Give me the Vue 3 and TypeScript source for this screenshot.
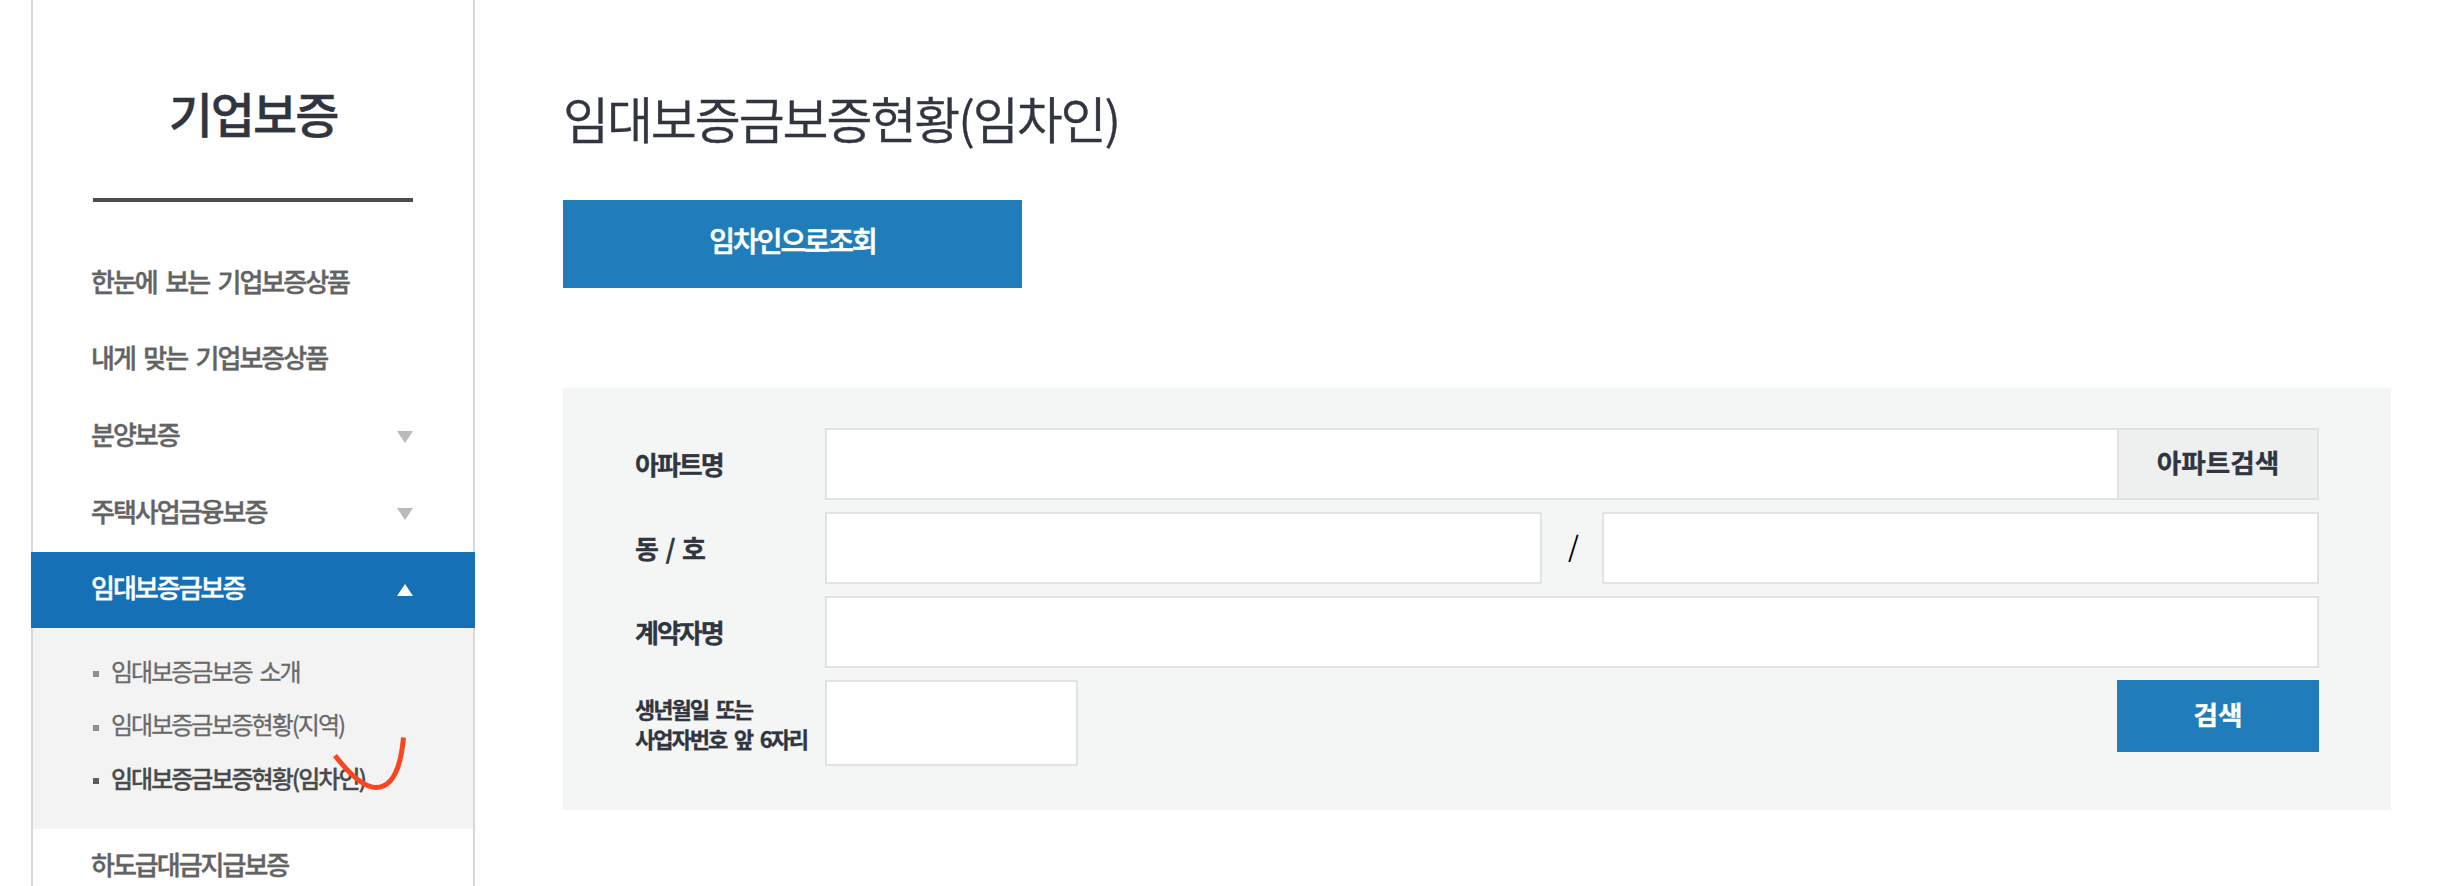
<script setup lang="ts">
interface MenuItem {
  label: string
  arrow?: 'up' | 'down'
  active?: boolean
  children?: { label: string; active?: boolean }[]
}

const menu: MenuItem[] = [
  { label: '한눈에 보는 기업보증상품' },
  { label: '내게 맞는 기업보증상품' },
  { label: '분양보증', arrow: 'down' },
  { label: '주택사업금융보증', arrow: 'down' },
  {
    label: '임대보증금보증',
    arrow: 'up',
    active: true,
    children: [
      { label: '임대보증금보증 소개' },
      { label: '임대보증금보증현황(지역)' },
      { label: '임대보증금보증현황(임차인)', active: true },
    ],
  },
  { label: '하도급대금지급보증' },
]
</script>

<template>
  <div class="page">
    <aside class="sidebar">
      <h2 class="side-title">기업보증</h2>
      <ul class="menu">
        <li v-for="item in menu" :key="item.label">
          <a class="menu-link" :class="{ active: item.active }">
            <span>{{ item.label }}</span>
            <svg v-if="item.arrow" class="arrow" :class="item.arrow" width="16" height="12" viewBox="0 0 16 12">
              <path d="M0 0H16L8 12Z" fill="currentColor" />
            </svg>
          </a>
          <ul v-if="item.children" class="submenu">
            <li v-for="sub in item.children" :key="sub.label" :class="{ current: sub.active }">{{ sub.label }}</li>
          </ul>
        </li>
      </ul>
      <svg class="check" width="80" height="60" viewBox="330 733 80 60">
        <path d="M335 755.5C349 773.500 363 787.500 376 787.500C391.500 787.500 400.500 770.500 403.500 737.500" fill="none" stroke="#fa4520" stroke-width="5" />
      </svg>
    </aside>
    <main class="content">
      <h1>임대보증금보증현황(임차인)</h1>
      <a class="tab">임차인으로조회</a>
      <form class="panel" @submit.prevent>
        <div class="row">
          <label>아파트명</label>
          <input class="grow joined" type="text" />
          <button class="find" type="button">아파트검색</button>
        </div>
        <div class="row">
          <label>동 / 호</label>
          <input class="grow" type="text" />
          <span class="slash">/</span>
          <input class="grow" type="text" />
        </div>
        <div class="row">
          <label>계약자명</label>
          <input class="grow" type="text" />
        </div>
        <div class="row last">
          <label class="small">생년월일 또는<br />사업자번호 앞 6자리</label>
          <input class="birth" type="text" />
          <button class="search" type="submit">검색</button>
        </div>
      </form>
    </main>
  </div>
</template>

<style>
body {
  margin: 0;
  background: #fff;
}
</style>

<style scoped>
* {
  box-sizing: border-box;
}
.page {
  display: flex;
  width: 2442px;
  height: 886px;
  overflow: hidden;
  background: #fefefe;
  font-family: 'Noto Sans CJK KR', sans-serif;
  letter-spacing: -2px;
  word-spacing: 4.600px;
  color: #30353f;
}
ul {
  list-style: none;
  margin: 0;
  padding: 0;
}
.sidebar {
  position: relative;
  flex: none;
  width: 444px;
  height: 886px;
  margin-left: 31px;
  border: solid #d9d9d9;
  border-width: 0 2px;
}
.side-title {
  height: 202px;
  margin: 0 60px 0 60px;
  padding-top: 77px;
  border-bottom: 4px solid #4d4d4d;
  font-size: 48px;
  font-weight: 500;
  line-height: 71px;
  text-align: center;
  -webkit-text-stroke: 0.4px currentColor;
}
.menu {
  margin: 43.600px -2px 0;
}
.menu-link {
  display: flex;
  align-items: center;
  justify-content: space-between;
  height: 76.600px;
  padding: 0 62px 7px 60px;
  font-size: 26px;
  font-weight: 500;
  color: #636363;
  -webkit-text-stroke: 0.4px currentColor;
}
.menu-link.active {
  height: 76px;
  background: #1670b6;
  color: #fff;
}
.arrow {
  margin-top: 7px;
  color: #bababa;
}
.arrow.up {
  transform: rotate(180deg);
  color: #fff;
}
.submenu {
  height: 201px;
  margin: 0 2px;
  padding: 15.500px 0 0 60px;
  background: #f3f3f3;
}
.submenu li {
  display: flex;
  align-items: center;
  height: 53.500px;
  font-size: 24px;
  color: #696969;
  -webkit-text-stroke: 0.3px currentColor;
}
.submenu li::before {
  content: '';
  width: 6px;
  height: 6px;
  margin: 8px 12px 0 0;
  background: #8f8f8f;
}
.submenu li.current {
  font-weight: 500;
  color: #4a4a4a;
}
.submenu li.current::before {
  background: #5c5c5c;
}
.check {
  position: absolute;
  left: 297px;
  top: 733px;
}
.content {
  width: 1828px;
  margin-left: 88px;
}
h1 {
  height: 200px;
  margin: 0;
  padding-top: 81px;
  font-size: 50px;
  font-weight: 350;
  line-height: 72px;
  letter-spacing: -2.080px;
  -webkit-text-stroke: 0.4px currentColor;
}
.tab {
  display: block;
  width: 459px;
  height: 88px;
  background: #207dba;
  color: #fff;
  font-size: 28px;
  font-weight: 500;
  line-height: 80px;
  text-align: center;
  -webkit-text-stroke: 0.6px currentColor;
}
.panel {
  display: flex;
  flex-direction: column;
  gap: 12px;
  height: 422px;
  margin-top: 100px;
  padding: 40px 72px 0;
  background: #f4f6f5;
}
.row {
  display: flex;
  height: 72px;
}
.row.last {
  height: 86px;
}
label {
  flex: none;
  width: 190px;
  font-size: 26px;
  font-weight: 700;
  line-height: 71px;
  white-space: nowrap;
  -webkit-text-stroke: 0.3px currentColor;
}
label.small {
  padding-top: 13px;
  font-size: 22px;
  line-height: 30px;
}
input {
  min-width: 0;
  height: 100%;
  margin: 0;
  padding: 0;
  border: 2px solid #e1e3e2;
  border-radius: 0;
  background: #fff;
}
.grow {
  flex: 1;
}
.joined {
  border-right: 0;
}
.birth {
  width: 253px;
}
.slash {
  width: 60px;
  padding-left: 1px;
  color: #000;
  font-size: 28px;
  line-height: 66px;
  text-align: center;
}
button {
  width: 202px;
  height: 72px;
  padding: 0 0 6px;
  border: 0;
  font-family: inherit;
  font-size: 26.670px;
  font-weight: 700;
  -webkit-text-stroke: 0.3px currentColor;
}
.find {
  border: 2px solid #e1e3e2;
  background: #eef0ef;
  color: #30353f;
}
.search {
  margin-left: auto;
  background: #207dba;
  color: #fff;
}
</style>
